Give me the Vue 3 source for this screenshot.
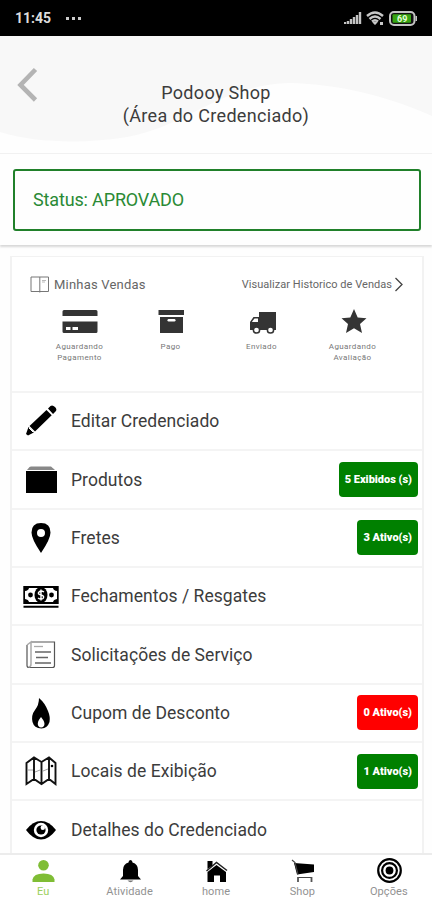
<template>
    <div class="screen">
        <div class="system_bar">
            <span class="clock">11:45</span>
            <span class="dots"><i></i><i></i><i></i></span>
            <svg class="signal" width="18" height="14" viewBox="0 0 18 14">
                <path d="M1 13v-2M4 13v-3M7 13V8M10 13V6M13 13V4M16 13V1" fill="none" stroke="#c4c4c4" stroke-width="2.4" />
            </svg>
            <svg class="wifi" width="19" height="15" viewBox="0 0 19 15">
                <path d="M1 5Q9 -2 17 5M3.500 8Q9 3 14.500 8M6 10.500Q9 8 12 10.500" fill="none" stroke="#c8c8c8" stroke-width="2.400" />
                <path d="M6.500 11.500Q9 9.500 11.500 11.500L9 14zM14 11h3v3h-3z" fill="#c8c8c8" />
            </svg>
            <svg class="battery" width="29" height="15" viewBox="0 0 29 15">
                <rect x="1" y="1" width="24.500" height="13" rx="4" fill="#111" stroke="#c4c4c4" stroke-width="2" />
                <path d="M26.500 5h1.500v5h-1.500z" fill="#c4c4c4" />
                <rect x="3.500" y="3.300" width="18.500" height="8.500" rx="1" fill="#36a411" />
                <text x="8" y="11" fill="#e4ffdc" font-size="9" font-weight="700">69</text>
            </svg>
        </div>

        <header class="header">
            <svg class="wave" width="432" height="118" viewBox="0 0 432 118">
                <path d="M0 0H432V80C390 61 340 48 289 47C220 49 190 89 127 101C85 108 35 107 0 96Z" fill="#f8f8f8" />
            </svg>
            <svg class="back" width="22" height="36" viewBox="0 0 22 36">
                <path d="M18.500 2.500L3.500 18L18.500 33" fill="none" stroke="#b4b4b4" stroke-width="4.600" />
            </svg>
            <h1>Podooy Shop<br>(Área do Credenciado)</h1>
        </header>

        <section class="status_area">
            <div class="status_box">Status: APROVADO</div>
        </section>

        <main class="card">
            <section class="sales">
                <div class="sales_head">
                    <svg width="20" height="17" viewBox="0 0 20 17">
                        <path d="M1 1H18.500V15.500H1zM9.800 1V16.500" fill="none" stroke="#777" stroke-width="1" />
                        <path d="M12 4.500h4M12 6h3" stroke="#aaa" stroke-width=".8" />
                    </svg>
                    <span class="sales_title">Minhas Vendas</span>
                    <span class="history">Visualizar Historico de Vendas</span>
                    <svg width="10" height="15" viewBox="0 0 10 15">
                        <path d="M1.500 1L8 7.500L1.500 14" fill="none" stroke="#444" stroke-width="1.300" />
                    </svg>
                </div>
                <div class="steps">
                    <div v-for="step in steps" :key="step.icon" class="step">
                        <svg width="36" height="28" viewBox="0 0 36 28" v-html="icons[step.icon]"></svg>
                        <span v-for="line in step.lines" :key="line">{{ line }}</span>
                    </div>
                </div>
            </section>

            <div v-for="item in menu" :key="item.label" class="row">
                <svg class="row_icon" width="36" height="36" viewBox="0 0 36 36" v-html="icons[item.icon]"></svg>
                <span class="row_label">{{ item.label }}</span>
                <span v-if="item.badge" class="badge" :class="{ red: item.red }">{{ item.badge }}</span>
            </div>
        </main>

        <nav class="tabs">
            <div v-for="tab in tabs" :key="tab.label" class="tab" :class="{ active: tab.active }">
                <svg width="26" height="26" viewBox="0 0 26 26" v-html="icons[tab.icon]"></svg>
                <span>{{ tab.label }}</span>
            </div>
        </nav>
    </div>
</template>

<script setup>
    const steps = [
        { icon: 'card', lines: ['Aguardando', 'Pagamento'] },
        { icon: 'box', lines: ['Pago'] },
        { icon: 'truck', lines: ['Enviado'] },
        { icon: 'star', lines: ['Aguardando', 'Avaliação'] }
    ]

    const menu = [
        { icon: 'pencil', label: 'Editar Credenciado' },
        { icon: 'folder', label: 'Produtos', badge: '5 Exibidos (s)' },
        { icon: 'pin', label: 'Fretes', badge: '3 Ativo(s)' },
        { icon: 'money', label: 'Fechamentos / Resgates' },
        { icon: 'paper', label: 'Solicitações de Serviço' },
        { icon: 'fire', label: 'Cupom de Desconto', badge: '0 Ativo(s)', red: true },
        { icon: 'map', label: 'Locais de Exibição', badge: '1 Ativo(s)' },
        { icon: 'eye', label: 'Detalhes do Credenciado' }
    ]

    const tabs = [
        { icon: 'person', label: 'Eu', active: true },
        { icon: 'bell', label: 'Atividade' },
        { icon: 'home', label: 'home' },
        { icon: 'cart', label: 'Shop' },
        { icon: 'target', label: 'Opções' }
    ]

    const icons = {
        // 판매 단계 아이콘
        card: '<path fill="#343434" d="M2 2Q0.500 2 .5 3.500V8H35.500V3.500Q35.500 2 34 2zM.5 13.500H35.500V23.500Q35.500 25 34 25H2Q.5 25 .5 23.500z"/><path fill="#fff" d="M4 19h4.500v3H4zM10.500 19H16v3h-5.500z"/>',
        box: '<path fill="#343434" d="M5.500 2H31V7H5.500zM7 9H30V25H7z"/><rect x="14.500" y="11" width="8" height="2.500" rx="1.200" fill="#fff"/>',
        truck: '<path fill="#343434" d="M15 4H32V22H6V14L9.500 9H15z"/><path fill="#fff" d="M8.500 13L10.500 10.500H14V14H8z"/><circle cx="12.500" cy="22" r="3.100" fill="#fff" stroke="#343434" stroke-width="1.500"/><circle cx="26.500" cy="22" r="3.100" fill="#fff" stroke="#343434" stroke-width="1.500"/>',
        star: '<path fill="#343434" d="M19 1L22.700 9.500L31.500 10.200L25 16L27 25L19 20.300L11 25L13 16L6.500 10.200L15.300 9.500z"/>',

        // 메뉴 아이콘
        pencil: '<path d="M25 5.500L27.500 3Q29.500 1.500 32 4Q34.500 6.500 32.500 8.500L30 11zM23.500 7L28.700 12.200L12 28.500L6.500 23zM5.500 24L10.800 29.500L5 32.500L3 31z"/><path d="M6 25L10 29" stroke="#fff" stroke-width="1"/>',
        folder: '<path d="M3 9H34V31H3z"/><path fill="#888" d="M6.500 5L8 4.500H28L32 8H4z"/>',
        pin: '<path fill-rule="evenodd" d="M18 3Q8.500 3 8.500 12.500Q8.500 19 18 33Q27.500 19 27.500 12.500Q27.500 3 18 3zM18 9a4 4 0 1 1 0 8a4 4 0 1 1 0-8z"/>',
        money: '<path d="M.3 8H35.700V26H.3zM.5 27.800H35.500V29.800H.5z"/><path fill="#fff" d="M6 10H30Q30.500 12.500 34 13V21Q30.500 21.500 30 24H6Q5.500 21.500 2 21V13Q5.500 12.500 6 10z"/><ellipse cx="18" cy="17" rx="6.500" ry="8"/><circle cx="7.500" cy="17" r="2.400"/><circle cx="28.500" cy="17" r="2.400"/><path d="M21 14Q18 12 16 14T18 17T20 20.500Q18 22 15 20M18 11.500V22.500" fill="none" stroke="#fff" stroke-width="1.400"/>',
        paper: '<path d="M8 5H31.500V28.500Q31.500 30.500 29.500 30.500H6Q4 30.500 4 28.500V8" fill="none" stroke="#555" stroke-width="1.200"/><path d="M4 8L8 5V27Q8 30 5.500 30" fill="none" stroke="#aaa" stroke-width="1.500"/><path d="M12 15H28M13 20.500H25M12 26H28" stroke="#666" stroke-width="1.300"/><path d="M11 9.500H20" stroke="#aaa" stroke-width="1.300"/>',
        fire: '<path d="M16 3Q22 8 25 16Q27.500 22 26.500 27Q24.500 33 18.500 33.500Q11 33 9.500 27Q8 20 12 15Q16 10 16 3z"/><path fill="#fff" d="M18 22Q13.200 28 15.300 31Q18 34 21 31Q23 28 18 22z"/>',
        map: '<path d="M3.500 10L11 4.500L18.500 9L26 4.500L32.500 10V31L26 26L18.500 31L11 26L3.500 31zM11 5V26M18.500 9V31M26 5V26" fill="none" stroke="#111" stroke-width="1.900"/><path d="M5 17h5M12 19l5-2M20 18l5-2" stroke="#888" stroke-width=".8"/><circle cx="29" cy="13" r="1.300"/>',
        eye: '<path d="M3 18Q10 9 18 9Q26 9 33 18Q26 27.500 18 27.500Q10 27.500 3 18z"/><circle cx="18" cy="18" r="7.200" fill="#fff"/><circle cx="18" cy="18" r="4.600"/><circle cx="19.800" cy="15.800" r="2.200" fill="#fff"/>',

        // 하단 탭 아이콘
        person: '<circle cx="13.500" cy="7.300" r="5.300"/><path d="M2.500 24V21.500Q3.500 15.500 13.500 15.500Q23.500 15.500 24.500 21.500V24z"/>',
        bell: '<path d="M13.500 2Q15.500 2 15.500 4.500Q21 6 21 12V18L24 21.500H3L6 18V12Q6 6 11.500 4.500Q11.500 2 13.500 2z"/><path fill="#777" d="M10.500 22.500H16.500Q13.500 26 10.500 22.500z"/>',
        home: '<path d="M13.500 7L23 14V24H17V17.500H11V24H4.500V14z"/><path d="M3.500 13L13.500 4.500L24 12.500" fill="none" stroke="#222" stroke-width="1.500"/><path d="M4.500 3H9.500V7.500L4.500 11z"/>',
        cart: '<path d="M5 5L25 6.500V14L8 16.500z"/><path d="M3 2L6 4.500L9 16.500M9 19.500H23" fill="none" stroke="#444" stroke-width="1.200"/><path d="M9 19V24M22.500 19V24" stroke="#555" stroke-width="1.800"/>',
        target: '<circle cx="13.500" cy="12.500" r="11.300" fill="none" stroke="#000" stroke-width="2.200"/><circle cx="13.500" cy="12.500" r="7.400" fill="none" stroke="#000" stroke-width="2.200"/><circle cx="13.500" cy="12.500" r="3.900"/>'
    }
</script>

<style>
    body {
        background-color: #fefefe;
        overflow: hidden;
    }
</style>

<style scoped>
    .screen {
        width: 432px;
        height: 900px;
        display: flex;
        flex-direction: column;
        overflow: hidden;
        font-family: Roboto, 'Liberation Sans', sans-serif;
        color: #3c3c3c;
    }

    .system_bar {
        flex: none;
        height: 36px;
        padding: 0 14px 0 15px;
        box-sizing: border-box;
        display: flex;
        align-items: center;
        background-color: #000;
    }

    .clock {
        color: #ddd;
        font-size: 14px;
        font-weight: 700;
    }

    .dots {
        display: flex;
        gap: 3px;
        margin-left: 15px;
    }

    .dots i {
        width: 3px;
        height: 3px;
        background-color: #ccc;
    }

    .signal {
        margin-left: auto;
    }

    .wifi {
        margin: 0 4px;
    }

    .header {
        flex: none;
        height: 118px;
        position: relative;
        box-sizing: border-box;
        border-bottom: 1px solid #f1f1f1;
    }

    .wave {
        position: absolute;
        top: 0;
        left: 0;
    }

    .back {
        position: absolute;
        left: 17px;
        top: 31px;
    }

    .header h1 {
        position: relative;
        margin: 0;
        padding-top: 46px;
        text-align: center;
        font-size: 18px;
        line-height: 22.5px;
        font-weight: 400;
        letter-spacing: 0.32px;
    }

    .status_area {
        flex: none;
        height: 91px;
        box-sizing: border-box;
        padding: 15px 11px 14px 13px;
        box-shadow: 0 2px 2px #d8d8d8;
    }

    .status_box {
        height: 62px;
        box-sizing: border-box;
        padding-left: 18px;
        border: 2px solid #20802a;
        border-radius: 3px;
        color: #2a8a35;
        font-size: 18px;
        line-height: 58px;
        letter-spacing: -0.15px;
    }

    .card {
        flex: 1;
        min-height: 0;
        margin: 11px 8px 0 10px;
        border: 1px solid #f2f2f2;
        border-width: 1px 2px 0;
        overflow: hidden;
        background-color: #fff;
    }

    .sales {
        height: 134px;
        box-sizing: border-box;
    }

    .sales_head {
        height: 17px;
        padding: 19px 18px 0 18px;
        display: flex;
        align-items: center;
    }

    .sales_title {
        margin-left: 4px;
        font-size: 13px;
        letter-spacing: 0.2px;
        color: #666;
    }

    .history {
        margin: 0 2px 0 auto;
        font-size: 11px;
        letter-spacing: 0.04px;
        color: #666;
    }

    .steps {
        display: flex;
        padding: 15px 24px 0 22px;
    }

    .step {
        width: 91.5px;
        display: flex;
        flex-direction: column;
        align-items: center;
        font-size: 8px;
        line-height: 10.5px;
        letter-spacing: 0.4px;
        color: #777;
    }

    .step svg {
        margin-bottom: 6px;
    }

    .row {
        height: 58.35px;
        box-sizing: border-box;
        border-top: 2px solid #f4f4f4;
        padding: 0 4px 0 11px;
        display: flex;
        align-items: center;
    }

    .row_label {
        margin-left: 12px;
        font-size: 17.5px;
        letter-spacing: 0.05px;
    }

    .badge {
        height: 35px;
        margin-left: auto;
        padding: 0 6px;
        border-radius: 4px;
        background-color: #008000;
        color: #fff;
        font-size: 11px;
        line-height: 36px;
        font-weight: 900;
        letter-spacing: 0;
    }

    .badge.red {
        background-color: #f00;
    }

    .tabs {
        flex: none;
        height: 47px;
        box-sizing: border-box;
        border-top: 2px solid #ececec;
        display: flex;
        background-color: #fff;
    }

    .tab {
        flex: 1;
        padding-top: 3px;
        display: flex;
        flex-direction: column;
        align-items: center;
        font-size: 11px;
        line-height: 15px;
        letter-spacing: 0.1px;
        color: #929292;
    }

    .tab svg {
        flex: none;
    }

    .tab.active {
        color: #9bd05c;
    }

    .tab.active svg {
        fill: #7fbd35;
    }
</style>
